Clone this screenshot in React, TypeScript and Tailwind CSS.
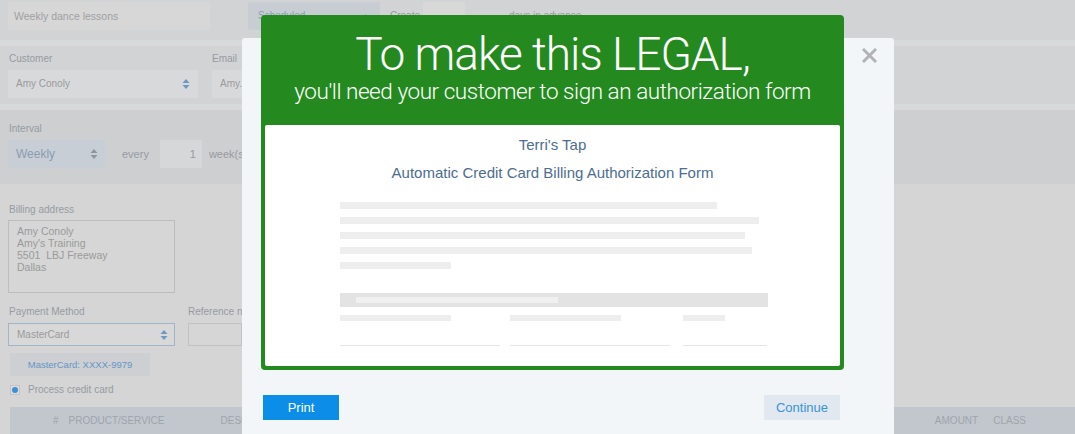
import React from "react";

const Arrows: React.FC<{ color: string }> = ({ color }) => (
  <svg width="8" height="12" viewBox="0 0 8 12" className="shrink-0">
    <path d="M4 1 L7.5 5 H0.5 Z" fill={color} />
    <path d="M4 11 L7.5 7 H0.5 Z" fill={color} />
  </svg>
);

const Bar: React.FC<{ w: string }> = ({ w }) => <div className={`h-[7px] bg-[#eeeeee] ${w}`} />;

const Backdrop: React.FC = () => (
  <div className="flex flex-col text-[10px] leading-[14px] text-[#969ba2]">
    {/* top band */}
    <div className="flex h-[40px] items-start bg-[#d2d3d5] px-[8px] pt-[2px]">
      <div className="flex h-[28px] w-[202px] items-center bg-[#d7d7d8] pl-[6px] text-[10.5px] text-[#a0a0a1]">
        Weekly dance lessons
      </div>
      <div className="ml-[38px] flex h-[28px] w-[132px] items-center justify-between bg-[#c8cdd4] px-[10px] text-[#8d9db0]">
        Scheduled
        <span className="text-[9px]">▲</span>
      </div>
      <div className="ml-[10px] flex h-[28px] items-center">Create</div>
      <div className="ml-[3px] h-[28px] w-[42px] bg-[#d8d8d9]" />
      <div className="ml-[44px] flex h-[28px] items-center">days in advance</div>
    </div>
    <div className="h-[6px] bg-[#d9d9db]" />
    {/* customer */}
    <div className="flex h-[58px] gap-[14px] bg-[#d2d3d5] px-[8px] pt-[6px]">
      <div className="flex w-[190px] flex-col gap-[4px]">
        <span className="pl-px">Customer</span>
        <div className="flex h-[28px] items-center justify-between bg-[#d8d9da] pl-[8px] pr-[8px] text-[#9a9a9a]">
          Amy Conoly
          <Arrows color="#6d98c4" />
        </div>
      </div>
      <div className="flex w-[30px] flex-col gap-[4px] overflow-hidden">
        <span>Email</span>
        <div className="flex h-[28px] items-center overflow-hidden whitespace-nowrap bg-[#d8d9da] pl-[8px] text-[#9a9a9a]">
          Amy.
        </div>
      </div>
    </div>
    <div className="h-[6px] bg-[#d9d9db]" />
    {/* interval */}
    <div className="flex h-[74px] flex-col gap-[4px] bg-[#cecfd1] px-[8px] pt-[12px]">
      <span className="pl-px">Interval</span>
      <div className="flex items-center">
        <div className="flex h-[28px] w-[97px] items-center justify-between bg-[#c8ced5] pl-[8px] pr-[7px] text-[12px] text-[#8a9cb0]">
          Weekly
          <Arrows color="#8d97a3" />
        </div>
        <span className="ml-[17px] text-[11px]">every</span>
        <div className="ml-[11px] flex h-[28px] w-[42px] items-center justify-end bg-[#d6d7d8] pr-[6px] text-[11px]">1</div>
        <span className="ml-[7px] w-[42px] overflow-hidden whitespace-nowrap text-[11px]">week(s) o</span>
      </div>
    </div>
    {/* lower */}
    <div className="flex flex-col bg-[#d5d5d5] pt-[19px]">
      <div className="px-[9px]">Billing address</div>
      <div className="mx-[8px] mt-[3px] flex h-[73px] w-[167px] flex-col border border-[#bdbdbd] bg-[#d6d6d6] pl-[8px] pt-[4px] text-[10.5px] leading-[12px] text-[#9a9a9a]">
        <span>Amy Conoly</span>
        <span>Amy's Training</span>
        <span>5501&nbsp; LBJ Freeway</span>
        <span>Dallas</span>
      </div>
      <div className="mt-[12px] flex gap-[13px] px-[8px]">
        <div className="flex w-[167px] flex-col gap-[4px]">
          <span className="pl-px">Payment Method</span>
          <div className="flex h-[23px] items-center justify-between border border-[#9eb5cb] bg-[#d8d8d8] pl-[8px] pr-[6px] text-[#9a9a9a]">
            MasterCard
            <Arrows color="#6d98c4" />
          </div>
        </div>
        <div className="flex w-[54px] flex-col gap-[4px] overflow-hidden">
          <span className="whitespace-nowrap">Reference n</span>
          <div className="h-[23px] border border-[#c2c2c2] bg-[#d6d6d6]" />
        </div>
      </div>
      <div className="ml-[10px] mt-[7px] flex h-[23px] w-[140px] items-center justify-center bg-[#cdcfd2] text-[9.5px] text-[#6596c6]">
        MasterCard: XXXX-9979
      </div>
      <div className="ml-[10px] mt-[7px] flex h-[14px] items-center gap-[8px] text-[10px]">
        <div className="flex h-[10px] w-[10px] items-center justify-center border border-[#c4c4c4] bg-[#dcdcdc]">
          <div className="h-[6px] w-[6px] rounded-full bg-[#3f8fd6]" />
        </div>
        <span>Process credit card</span>
      </div>
      <div className="ml-[10px] mt-[10px] flex h-[27px] items-center bg-[#c2c7ce] text-[10px] text-[#9ea4ac]">
        <span className="ml-[43px]">#</span>
        <span className="ml-[10px]">PRODUCT/SERVICE</span>
        <span className="ml-[56px]">DESCRIPTION</span>
        <span className="ml-auto">AMOUNT</span>
        <span className="ml-[15px] mr-[49px]">CLASS</span>
      </div>
    </div>
  </div>
);

const Modal: React.FC = () => (
  <div className="absolute left-[242px] top-[38px] flex h-[420px] w-[652px] flex-col rounded-t-[3px] bg-[#f3f6f9]">
    <svg className="absolute right-[17px] top-[10px]" width="15" height="15" viewBox="0 0 15 15">
      <path d="M2 2 L13 13 M13 2 L2 13" stroke="#b3b3b3" strokeWidth="3" strokeLinecap="square" />
    </svg>
    <div className="-mt-[23px] ml-[19px] flex h-[355px] w-[583px] flex-col rounded-[4px] bg-[#248a1f] px-[4px] pb-[4px]">
      <div
        className="flex h-[110px] flex-col items-center pt-[13px] text-white"
        style={{ fontFamily: "Roboto, 'Liberation Sans', sans-serif" }}
      >
        <div className="text-[46px] font-light leading-[52px] tracking-[-1px]">To make this LEGAL,</div>
        <div className="-mt-[3px] text-[22.5px] font-light leading-[28px] tracking-[-0.45px]">
          you'll need your customer to sign an authorization form
        </div>
      </div>
      <div className="flex flex-1 flex-col rounded-[2px] bg-white">
        <div className="mt-[10px] text-center text-[15px] leading-[20px] text-[#4d6d91]">Terri's Tap</div>
        <div className="mt-[8px] text-center text-[15px] leading-[20px] text-[#4d6d91]">
          Automatic Credit Card Billing Authorization Form
        </div>
        <div className="mt-[19px] flex flex-col gap-[8px] pl-[75px]">
          <Bar w="w-[377px]" />
          <Bar w="w-[419px]" />
          <Bar w="w-[405px]" />
          <Bar w="w-[412px]" />
          <Bar w="w-[111px]" />
        </div>
        <div className="ml-[75px] mt-[24px] flex h-[14px] w-[428px] items-center bg-[#e3e3e3] pl-[16px]">
          <div className="h-[6px] w-[202px] bg-[#f0f0f0]" />
        </div>
        <div className="ml-[75px] mt-[8px] grid grid-cols-[170px_173px_85px]">
          <div className="h-[6px] w-[111px] bg-[#eeeeee]" />
          <div className="h-[6px] w-[111px] bg-[#eeeeee]" />
          <div className="h-[6px] w-[42px] bg-[#eeeeee]" />
          <div className="mt-[24px] h-px w-[160px] bg-[#e6e6e6]" />
          <div className="mt-[24px] h-px w-[160px] bg-[#e6e6e6]" />
          <div className="mt-[24px] h-px w-[84px] bg-[#e6e6e6]" />
        </div>
      </div>
    </div>
    <div className="mt-[25px] flex justify-between pl-[21px] pr-[54px] text-[13px]">
      <button className="h-[25px] w-[76px] bg-[#0c8de8] text-white">Print</button>
      <button className="h-[25px] w-[76px] bg-[#e1e8f0] text-[#3a93d6]">Continue</button>
    </div>
  </div>
);

export default function App() {
  return (
    <div
      className="relative h-[434px] w-[1075px] overflow-hidden bg-[#d5d5d5]"
      style={{ fontFamily: "'Liberation Sans', Arial, sans-serif" }}
    >
      <Backdrop />
      <Modal />
    </div>
  );
}
